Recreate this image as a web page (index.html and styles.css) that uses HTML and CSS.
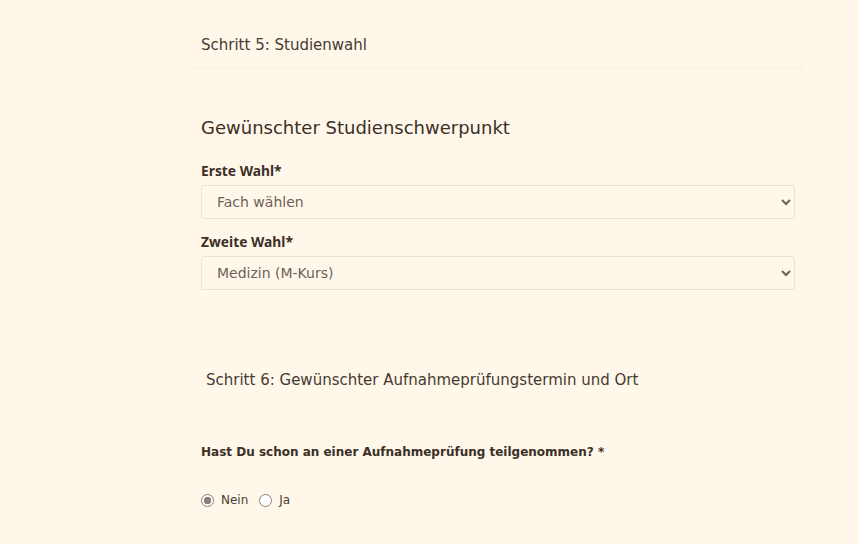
FILE: index.html
```html
<html>
<head>
    <meta charset="utf-8">
    <link rel="stylesheet" href="styles.css">
</head>
<body>
<div class="page">
    <div class="step-head">
        <span>Schritt 5: Studienwahl</span>
    </div>

    <div class="section">
        <h2 class="section-title">Gewünschter Studienschwerpunkt</h2>

        <label class="field-label" for="wahl1">Erste Wahl*</label>
        <div class="select-wrap">
            <select id="wahl1" class="select">
                <option>Fach wählen</option>
            </select>
        </div>

        <label class="field-label" for="wahl2">Zweite Wahl*</label>
        <div class="select-wrap">
            <select id="wahl2" class="select">
                <option>Medizin (M-Kurs)</option>
            </select>
        </div>
    </div>

    <div class="step-six">Schritt 6: Gewünschter Aufnahmeprüfungstermin und Ort</div>

    <div class="question">Hast Du schon an einer Aufnahmeprüfung teilgenommen? *</div>

    <div class="radios">
        <label class="radio"><span class="dot checked"></span>Nein</label>
        <label class="radio"><span class="dot"></span>Ja</label>
    </div>
</div>
</body>
</html>
```

FILE: styles.css
```css
html, body {
    margin: 0;
    padding: 0;
    background-color: #fff7e9;
    color: #3b2f27;
    font-family: "DejaVu Sans", Verdana, sans-serif;
}

.page {
    width: 612px;
    margin-left: 191px;
}

.step-head {
    padding: 36px 10px 0 10px;
    height: 30px;
    border-bottom: 3px solid #fbf2e3;
    font-size: 15px;
    color: #463a31;
}

.section {
    padding: 48px 8px 0 10px;
}

.section-title {
    margin: 0 0 23px 0;
    font-size: 18px;
    font-weight: normal;
    color: #3b2f27;
}

.field-label {
    display: block;
    margin-bottom: 5px;
    font-family: "Noto Sans", sans-serif;
    font-weight: bold;
    font-size: 13.8px;
    color: #3b2f27;
}

.select-wrap {
    margin-bottom: 13px;
}

.select {
    display: block;
    width: 100%;
    height: 34px;
    padding: 0 11px;
    border: 1px solid #ece3d4;
    border-radius: 3px;
    background-color: #fff8ea;
    color: #6d6157;
    font-family: "DejaVu Sans", Verdana, sans-serif;
    font-size: 14px;
}

.step-six {
    margin-top: 81px;
    padding-left: 15px;
    font-size: 15px;
    color: #463a31;
}

.question {
    margin-top: 56px;
    padding-left: 10px;
    font-weight: bold;
    font-size: 12px;
    color: #3b2f27;
}

.radios {
    display: flex;
    gap: 11px;
    margin-top: 34px;
    padding-left: 10px;
    font-size: 12px;
    color: #4a3e35;
}

.radio {
    display: flex;
    align-items: center;
    gap: 7px;
}

.dot {
    display: inline-block;
    width: 13px;
    height: 13px;
    border: 1px solid #8b8078;
    border-radius: 50%;
    background-color: #fff;
    box-sizing: border-box;
}

.dot.checked {
    background: radial-gradient(circle, #8c827b 0 3.5px, #fff 4px);
}
```
